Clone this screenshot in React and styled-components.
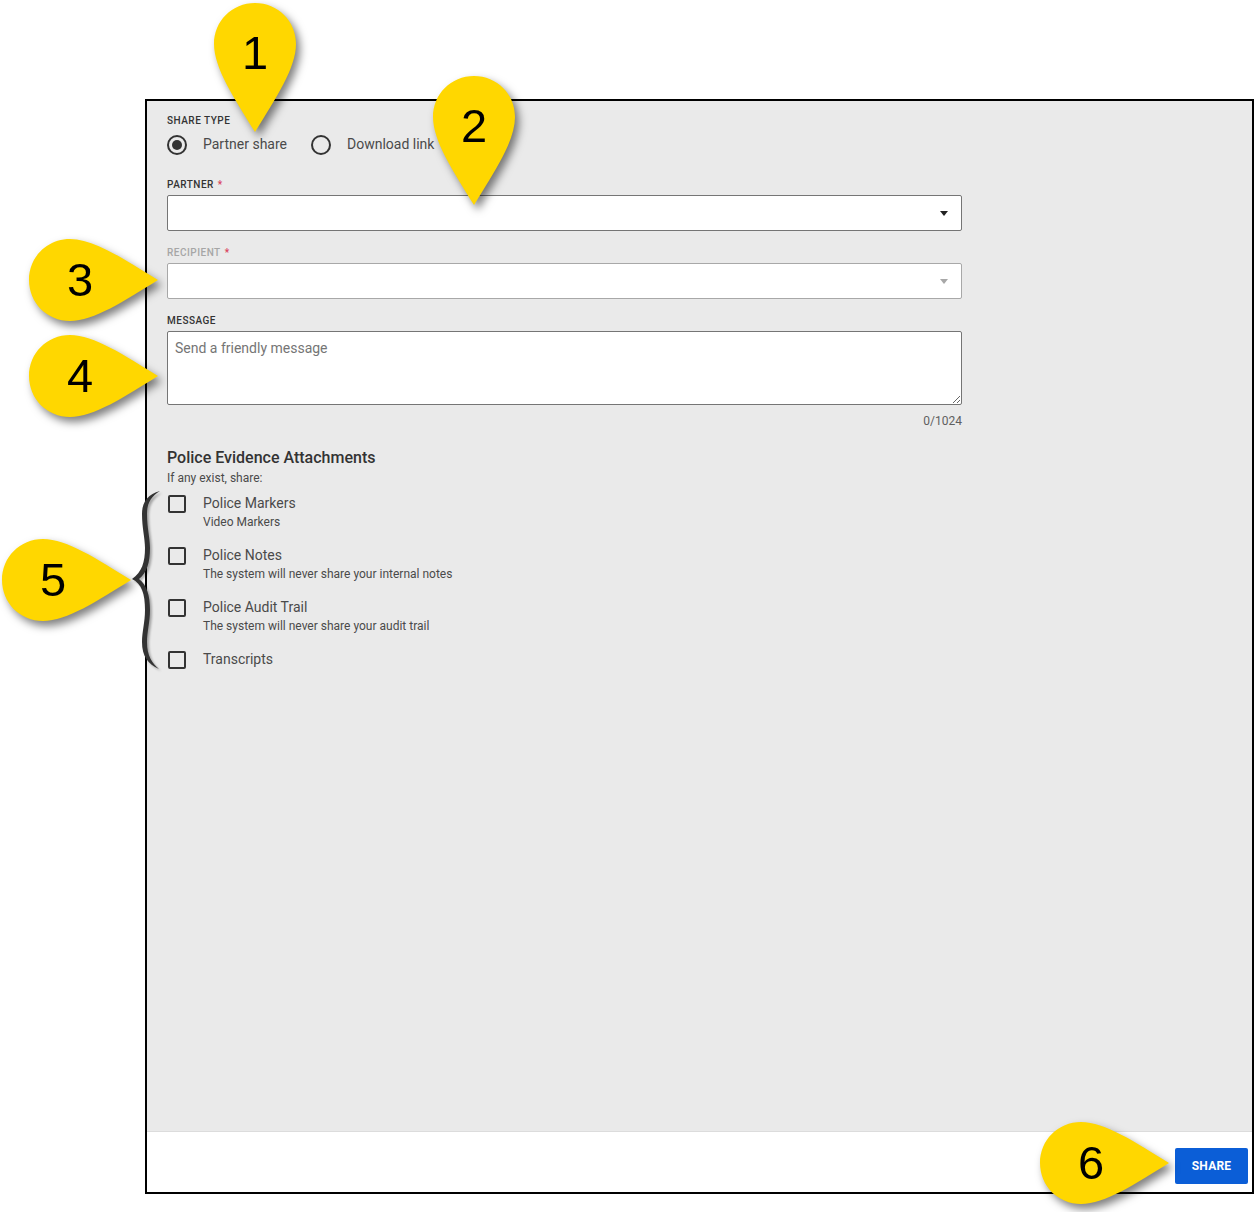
import React from 'react'
import styled, { createGlobalStyle } from 'styled-components'

const GlobalStyle = createGlobalStyle`
    html, body {
        margin: 0;
        padding: 0;
        background: #ffffff;
        font-family: Roboto, "Liberation Sans", sans-serif;
    }
`
const Page = styled.div`
    position: relative;
    width: 1254px;
    height: 1212px;
    padding: 99px 0 18px 145px;
    box-sizing: border-box;
    overflow: hidden;
`
const Frame = styled.div`
    width: 1109px;
    height: 1095px;
    box-sizing: border-box;
    border: 2px solid #000000;
    display: flex;
    flex-direction: column;
    background: #ffffff;
`
const Content = styled.div`
    flex: 1;
    background: #eaeaea;
    padding: 14px 20px 0;
`
const Form = styled.div`
    width: 795px;
    display: flex;
    flex-direction: column;
`
const Footer = styled.div`
    height: 44px;
    border-top: 1px solid #dcdcdc;
    display: flex;
    justify-content: flex-end;
    align-items: flex-start;
    padding: 16px 4px 0 0;
`
const ShareButton = styled.button`
    width: 73px;
    height: 36px;
    border: 0;
    border-radius: 2px;
    background: #0b5ed7;
    color: #ffffff;
    font-family: Roboto, sans-serif;
    font-size: 12px;
    font-weight: 700;
    letter-spacing: 0.2px;
`
const Label = styled.div`
    height: 12px;
    line-height: 12px;
    font-size: 10px;
    font-weight: 500;
    letter-spacing: 0.5px;
    text-transform: uppercase;
    color: ${p => (p.$disabled ? '#a6a6a6' : '#333333')};
    margin-bottom: ${p => p.$gap || 4}px;
`
const Required = styled.span`
    color: #d9415a;
    margin-left: 4px;
`
const RadioGroup = styled.div`
    display: flex;
    align-items: center;
    height: 20px;
    gap: 24px;
    margin-bottom: 24px;
`
const RadioOption = styled.div`
    display: flex;
    align-items: center;
    gap: 16px;
`
const RadioCircle = styled.span`
    width: 20px;
    height: 20px;
    box-sizing: border-box;
    border: 2px solid #333333;
    border-radius: 50%;
    display: flex;
    align-items: center;
    justify-content: center;
    &::after {
        content: '';
        display: ${p => (p.$checked ? 'block' : 'none')};
        width: 10px;
        height: 10px;
        border-radius: 50%;
        background: #333333;
    }
`
const OptionText = styled.span`
    font-size: 14px;
    line-height: 18px;
    margin-top: -2px;
    color: #4a4a4a;
`
const SelectBox = styled.div`
    height: 36px;
    box-sizing: border-box;
    background: #ffffff;
    border: 1px solid ${p => (p.$disabled ? '#a8a8a8' : '#757575')};
    border-radius: 2px;
    display: flex;
    align-items: center;
    justify-content: flex-end;
    padding-right: 13px;
    margin-bottom: 16px;
`
const Caret = styled.span`
    width: 0;
    height: 0;
    border-left: 4px solid transparent;
    border-right: 4px solid transparent;
    border-top: 5px solid ${p => (p.$disabled ? '#a8a8a8' : '#222222')};
`
const MessageBox = styled.textarea`
    display: block;
    width: 100%;
    height: 74px;
    box-sizing: border-box;
    background: #ffffff;
    border: 1px solid #757575;
    border-radius: 2px;
    padding: 7px 7px;
    margin: 0;
    outline: none;
    font-family: Roboto, sans-serif;
    font-size: 14px;
    line-height: 18px;
    &::placeholder {
        color: #757575;
        opacity: 1;
    }
`
const Counter = styled.div`
    text-align: right;
    font-size: 12px;
    line-height: 14px;
    margin-top: 9px;
    color: #5f5f5f;
`
const SectionTitle = styled.div`
    font-size: 16px;
    font-weight: 500;
    line-height: 20px;
    color: #333333;
    margin-top: 20px;
`
const SectionHint = styled.div`
    font-size: 12px;
    line-height: 14px;
    color: #4a4a4a;
    margin-top: 3px;
    margin-bottom: 8px;
`
const CheckRow = styled.div`
    display: flex;
    align-items: flex-start;
    height: 52px;
`
const CheckBox = styled.span`
    width: 18px;
    height: 18px;
    box-sizing: border-box;
    border: 2px solid #333333;
    border-radius: 2px;
    margin: 2px 17px 0 1px;
    flex-shrink: 0;
`
const CheckText = styled.div`
    display: flex;
    flex-direction: column;
`
const CheckTitle = styled.span`
    font-size: 14px;
    line-height: 20px;
    color: #4a4a4a;
`
const CheckNote = styled.span`
    font-size: 12px;
    line-height: 16px;
    margin-top: 1px;
    color: #4a4a4a;
`
const PinWrap = styled.div`
    position: absolute;
    left: ${p => p.$x}px;
    top: ${p => p.$y}px;
    width: ${p => (p.$down ? 82 : 130)}px;
    height: ${p => (p.$down ? 130 : 82)}px;
    filter: drop-shadow(4px 5px 4px rgba(0, 0, 0, 0.5));
`
const PinShape = styled.svg`
    display: block;
    width: 100%;
    height: 100%;
`
const PinNumber = styled.span`
    position: absolute;
    left: 0;
    top: 0;
    width: 82px;
    height: 82px;
    display: flex;
    align-items: center;
    justify-content: center;
    padding-left: ${p => (p.$down ? 0 : 20)}px;
    padding-top: ${p => (p.$down ? 16 : 0)}px;
    padding-bottom: ${p => (p.$down ? 0 : 2)}px;
    box-sizing: border-box;
    font-family: "Liberation Sans", Arial, sans-serif;
    font-size: 47px;
    color: #000000;
`
const Brace = styled.svg`
    position: absolute;
    left: 130px;
    top: 488px;
    filter: drop-shadow(2px 2px 1px rgba(0, 0, 0, 0.3));
`

const Pin = ({ n, x, y, down }) => (
    <PinWrap $x={x} $y={y} $down={down}>
        {down ? (
            <PinShape viewBox="0 0 82 130">
                <path
                    d="M41 0C64 0 82 18 82 41C82 65 62 95 41 129C20 95 0 65 0 41C0 18 18 0 41 0Z"
                    fill="#ffd700"
                />
            </PinShape>
        ) : (
            <PinShape viewBox="0 0 130 82">
                <path
                    d="M0 41C0 18 18 0 41 0C65 0 95 20 129 41C95 62 65 82 41 82C18 82 0 64 0 41Z"
                    fill="#ffd700"
                />
            </PinShape>
        )}
        <PinNumber $down={down}>{n}</PinNumber>
    </PinWrap>
)

const attachments = [
    { title: 'Police Markers', note: 'Video Markers' },
    { title: 'Police Notes', note: 'The system will never share your internal notes' },
    { title: 'Police Audit Trail', note: 'The system will never share your audit trail' },
    { title: 'Transcripts' },
]

const App = () => (
    <Page>
        <GlobalStyle />
        <Frame>
            <Content>
                <Form>
                    <Label $gap={8}>Share type</Label>
                    <RadioGroup>
                        <RadioOption>
                            <RadioCircle $checked />
                            <OptionText>Partner share</OptionText>
                        </RadioOption>
                        <RadioOption>
                            <RadioCircle />
                            <OptionText>Download link</OptionText>
                        </RadioOption>
                    </RadioGroup>
                    <Label>
                        Partner<Required>*</Required>
                    </Label>
                    <SelectBox>
                        <Caret />
                    </SelectBox>
                    <Label $disabled>
                        Recipient<Required>*</Required>
                    </Label>
                    <SelectBox $disabled>
                        <Caret $disabled />
                    </SelectBox>
                    <Label>Message</Label>
                    <MessageBox placeholder="Send a friendly message" />
                    <Counter>0/1024</Counter>
                    <SectionTitle>Police Evidence Attachments</SectionTitle>
                    <SectionHint>If any exist, share:</SectionHint>
                    {attachments.map(item => (
                        <CheckRow key={item.title}>
                            <CheckBox />
                            <CheckText>
                                <CheckTitle>{item.title}</CheckTitle>
                                {item.note && <CheckNote>{item.note}</CheckNote>}
                            </CheckText>
                        </CheckRow>
                    ))}
                </Form>
            </Content>
            <Footer>
                <ShareButton>SHARE</ShareButton>
            </Footer>
        </Frame>
        <Brace width="34" height="186" viewBox="0 0 34 186">
            <path
                d="M30 3C18 6 12 14 12 26C12 40 15 50 15 60C15 74 12 84 2 91C12 96 15 106 15 122C15 134 12 144 12 154C12 168 18 176 29 181C22 175 17 168 17 154C17 144 20 134 20 122C20 108 17 97 9 91C17 85 20 74 20 60C20 50 17 40 17 26C17 14 22 8 30 3Z"
                fill="#333333"
            />
        </Brace>
        <Pin n="1" x={214} y={3} down />
        <Pin n="2" x={433} y={76} down />
        <Pin n="3" x={29} y={239} />
        <Pin n="4" x={29} y={335} />
        <Pin n="5" x={2} y={539} />
        <Pin n="6" x={1040} y={1122} />
    </Page>
)

export default App
